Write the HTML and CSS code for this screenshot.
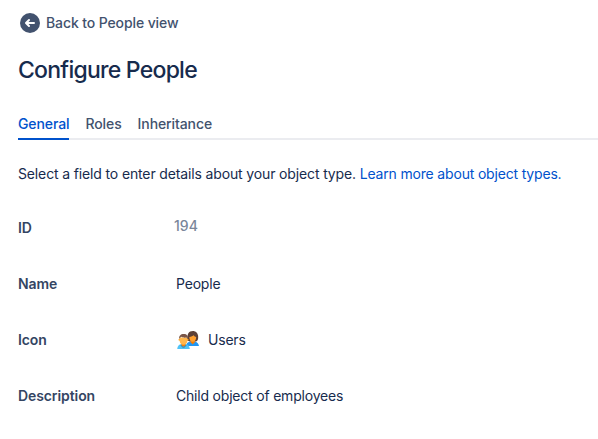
FILE: index.html
```html
<!DOCTYPE html>
<html lang="en">
<head>
<meta charset="utf-8">
<title>Configure People</title>
<link rel="stylesheet" href="styles.css">
</head>
<body>
<main class="page">
  <a class="back" href="#">
    <svg class="back-icon" viewBox="0 0 20 20" aria-hidden="true"><circle cx="10" cy="10" r="10" fill="#42526e"/><path d="M14 10H6.500M9 7l-3 3 3 3" fill="none" stroke="#fff" stroke-width="2" stroke-linecap="round" stroke-linejoin="round"/></svg>
    <span>Back to People view</span>
  </a>
  <h1 class="title">Configure People</h1>
  <nav class="tabs">
    <a class="tab tab-active" href="#">General</a>
    <a class="tab" href="#">Roles</a>
    <a class="tab" href="#">Inheritance</a>
  </nav>
  <p class="intro">Select a field to enter details about your object type. <a class="link" href="#">Learn more about object types.</a></p>
  <dl class="fields">
    <div class="row"><dt>ID</dt><dd class="muted">194</dd></div>
    <div class="row"><dt>Name</dt><dd>People</dd></div>
    <div class="row"><dt>Icon</dt><dd class="with-icon">
      <svg class="users" viewBox="0 0 24 20" aria-hidden="true">
        <path d="M10 16c.3-3 2-4.200 4.500-4.600h4c2.600.5 4 2 4.500 4.600z" fill="#2196f3"/>
        <path d="M11.200 10.500C11 4 12.500 1 17 1c2.500 0 5.200 2 5.200 6 0 2.500-.5 3.800-2.400 4.600h-6z" fill="#5d4037"/>
        <path d="M14.700 10h4v2.200l-2 2.400-2-2.400z" fill="#f57c00"/>
        <path d="M13.300 7c2-.2 3.500-.8 4.500-1.700.5 1 1.400 1.500 2.400 1.700 0 3-1.400 4.700-3.500 4.700S13.300 10 13.300 7z" fill="#ff9f2e"/>
        <path d="M1.200 19c.3-3.200 1.800-4.500 4.200-5h4c2.600.5 4 2 4.400 5z" fill="#4fc3f7"/>
        <path d="M5.500 12.500h4v2.200c-.7 2.200-3.300 2.200-4 0z" fill="#f57c00"/>
        <path d="M5 15.300c1 2.400 4 2.400 5 0" fill="none" stroke="#455a64" stroke-width=".8"/>
        <circle cx="3.500" cy="9.800" r="1" fill="#ffa726"/><circle cx="11.500" cy="9.800" r="1" fill="#ffa726"/>
        <path d="M3.700 7.500h7.600V11c0 2.400-1.600 3.700-3.800 3.700S3.700 13.400 3.700 11z" fill="#ffb74d"/>
        <path d="M3.200 9C2.800 6 4.500 4 7.800 4c3.200 0 4.400 2 4 5l-1.300-1.500c-2.700.4-4-.2-5-.8L4 7.700z" fill="#795548"/>
      </svg>
      <span>Users</span></dd></div>
    <div class="row"><dt>Description</dt><dd>Child object of employees</dd></div>
  </dl>
</main>
</body>
</html>
```
FILE: styles.css
```css
* { box-sizing: border-box; }
body {
  margin: 0;
  background: #fff;
  color: #172b4d;
  font: 14px/20px Inter, sans-serif;
  letter-spacing: -0.14px;
  overflow: hidden;
}
a { color: inherit; text-decoration: none; }
.page { padding: 13px 0 0 18px; }
.back {
  display: flex;
  align-items: center;
  gap: 6px;
  margin-left: 2px;
  color: #42526e;
  font-weight: 500;
  letter-spacing: -0.11px;
}
.back-icon { width: 20px; height: 20px; }
.title {
  margin: 23px 0 0;
  font-size: 23px;
  line-height: 28px;
  font-weight: 550;
  letter-spacing: -0.75px;
}
.tabs {
  display: flex;
  gap: 16px;
  margin-top: 26px;
  height: 30px;
  border-bottom: 2px solid #ebecf0;
}
.tab {
  height: 30px;
  padding-top: 4px;
  color: #42526e;
  font-weight: 500;
  letter-spacing: -0.1px;
}
.tab-active { color: #0052cc; border-bottom: 2px solid #0052cc; }
.intro { margin: 24px 0 0; white-space: nowrap; }
.link { color: #0052cc; letter-spacing: -0.18px; }
.fields { margin: 16px 0 0; }
.row {
  display: grid;
  grid-template-columns: 158px 1fr;
  align-items: center;
  height: 56px;
}
dt { color: #344563; font-weight: 600; letter-spacing: -0.09px; }
dd { margin: 0; letter-spacing: -0.2px; }
.muted { margin: -4px 0 0 -2px; color: #7a869a; font-weight: 500; letter-spacing: 0; }
.with-icon { display: flex; align-items: center; gap: 8px; }
.users { width: 24px; height: 20px; }
```
